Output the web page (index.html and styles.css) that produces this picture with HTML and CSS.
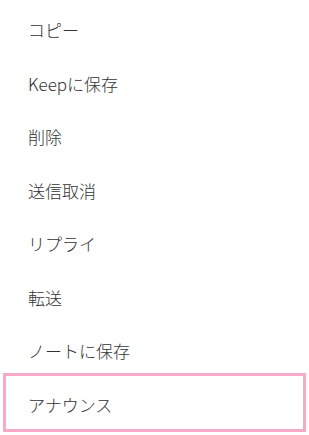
FILE: index.html
```html
<!DOCTYPE html>
<html lang="ja">
<head>
    <meta charset="UTF-8">
    <meta name="viewport" content="width=device-width, initial-scale=1.0">
    <title>メニュー</title>
    <link rel="stylesheet" href="styles.css">
</head>
<body>
    <ul class="menu">
        <li class="menu-item">コピー</li>
        <li class="menu-item">Keepに保存</li>
        <li class="menu-item">削除</li>
        <li class="menu-item">送信取消</li>
        <li class="menu-item">リプライ</li>
        <li class="menu-item">転送</li>
        <li class="menu-item">ノートに保存</li>
        <li class="menu-item selected">アナウンス</li>
    </ul>
</body>
</html>
```

FILE: styles.css
```css
body {
    background-color: #fff;
    font-family: "Noto Sans CJK JP", "Noto Sans", sans-serif;
    margin: 0;
    padding: 0;
}
.menu {
    list-style: none;
    margin: 0;
    padding: 3px 3px 0;
}
.menu-item {
    display: flex;
    align-items: center;
    height: 53.5px;
    padding-left: 25px;
    font-size: 17px;
    font-weight: 300;
    color: #333;
}
.menu-item.selected {
    height: 59px;
    margin-top: -4.5px;
    padding-top: 3px;
    box-sizing: border-box;
    border: 3px solid #f7aac8;
    padding-left: 22px;
}
```
